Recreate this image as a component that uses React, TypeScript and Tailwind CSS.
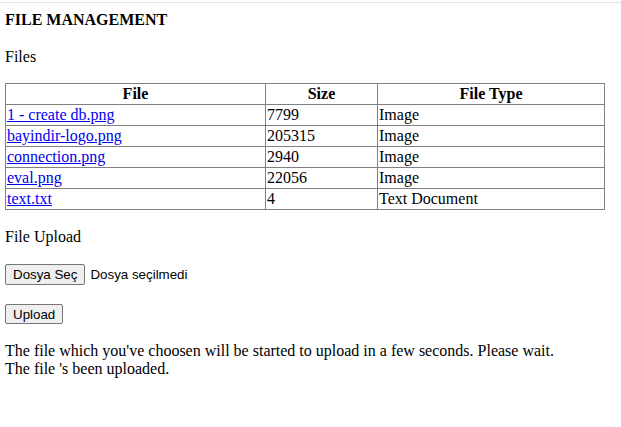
export default function App() {
  const files = [
    { name: "1 - create db.png", size: "7799", type: "Image" },
    { name: "bayindir-logo.png", size: "205315", type: "Image" },
    { name: "connection.png", size: "2940", type: "Image" },
    { name: "eval.png", size: "22056", type: "Image" },
    { name: "text.txt", size: "4", type: "Text Document" },
  ]

  return (
    <div className="min-h-[427px] bg-white pt-[2px] font-['Liberation_Serif',serif] text-[16px] text-black">
      <div className="border-t border-[#e3e3e3] px-[5px]">
        <h4 className="mt-[8px] text-[16px] font-bold leading-[18px]">FILE MANAGEMENT</h4>
        <p className="mt-[19px] leading-[18px]">Files</p>

        <table className="mt-[17px] w-[600px] border-collapse border border-[#808080]">
          <thead>
            <tr>
              <th className="w-[260px] border border-[#808080] px-[1px] py-[1px] text-center leading-[18px]">File</th>
              <th className="w-[112px] border border-[#808080] px-[1px] py-[1px] text-center leading-[18px]">Size</th>
              <th className="border border-[#808080] px-[1px] py-[1px] text-center leading-[18px]">File Type</th>
            </tr>
          </thead>
          <tbody>
            {files.map((f) => (
              <tr key={f.name}>
                <td className="border border-[#808080] px-[1px] py-[1px] leading-[18px]">
                  <a href="#" className="text-[#0000ee] underline">
                    {f.name}
                  </a>
                </td>
                <td className="border border-[#808080] px-[1px] py-[1px] leading-[18px]">{f.size}</td>
                <td className="border border-[#808080] px-[1px] py-[1px] leading-[18px]">{f.type}</td>
              </tr>
            ))}
          </tbody>
        </table>

        <p className="mt-[18px] leading-[18px]">File Upload</p>

        <div className="mt-[18px] flex items-center gap-[5px] font-['Liberation_Sans',sans-serif] text-[13.33px]">
          <button className="h-[21px] rounded-[2px] border border-[#767676] bg-[#efefef] px-[7px] leading-[15px]">
            Dosya Seç
          </button>
          <span>Dosya seçilmedi</span>
        </div>

        <div className="mt-[19px] font-['Liberation_Sans',sans-serif] text-[13.33px]">
          <button className="h-[20px] rounded-[2px] border border-[#767676] bg-[#efefef] px-[7px] leading-[15px]">
            Upload
          </button>
        </div>

        <p className="mt-[18px] leading-[18px]">
          The file which you've choosen will be started to upload in a few seconds. Please wait.
          <br />
          The file 's been uploaded.
        </p>
      </div>
    </div>
  )
}
